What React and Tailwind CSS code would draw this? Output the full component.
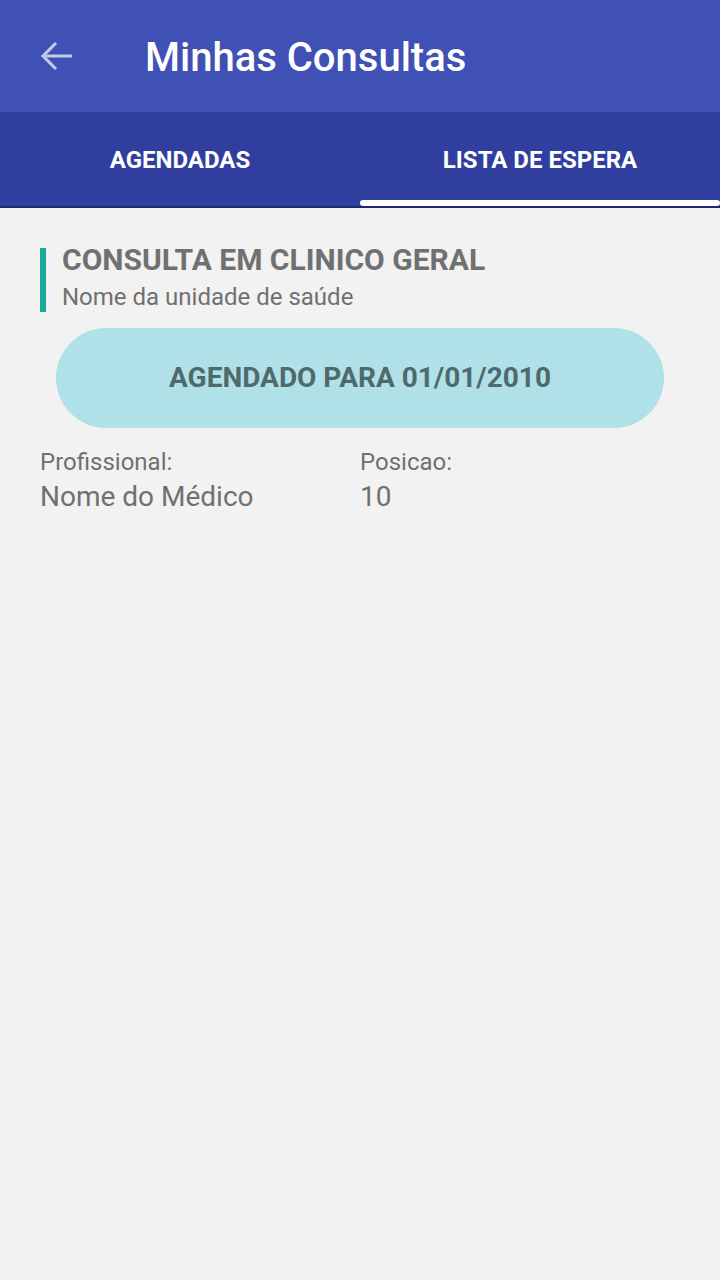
import React, { useState } from 'react';

const App = () => {
  const [tab, setTab] = useState('espera');

  return (
    <div className="min-h-screen bg-[#f2f2f2]" style={{ fontFamily: 'Roboto, "Liberation Sans", sans-serif' }}>
      {/* Toolbar */}
      <div className="h-[112px] bg-[#3f51b5] flex items-center">
        <button className="ml-[40px] w-[32px] h-[32px] flex items-center justify-center text-[#c5cae9]">
          <svg width="32" height="32" viewBox="0 0 32 32" fill="none" stroke="currentColor" strokeWidth="3">
            <path d="M32 16H4" />
            <path d="M16 3L3 16l13 13" />
          </svg>
        </button>
        <h1 className="ml-[73px] mt-[4px] text-[40px] font-medium text-white leading-none">Minhas Consultas</h1>
      </div>

      {/* Tabs */}
      <div className="relative h-[96px] bg-[#303f9f] flex border-b-2 border-[#1f2a6e]">
        <button
          onClick={() => setTab('agendadas')}
          className="relative flex-1 flex items-center justify-center text-[24px] font-bold text-white pt-[2px]"
        >
          AGENDADAS
          {tab === 'agendadas' && (
            <span className="absolute left-0 right-0 bottom-0 h-[6px] bg-white rounded-[3px]" />
          )}
        </button>
        <button
          onClick={() => setTab('espera')}
          className="relative flex-1 flex items-center justify-center text-[24px] font-bold text-white pt-[2px]"
        >
          LISTA DE ESPERA
          {tab === 'espera' && (
            <span className="absolute left-0 right-0 bottom-0 h-[6px] bg-white rounded-[3px]" />
          )}
        </button>
      </div>

      {/* Card */}
      <div className="px-[40px] pt-[40px]">
        <div className="border-l-[6px] border-[#1aaa9a] pl-[16px] h-[64px]">
          <h2 className="text-[30px] font-bold text-[#707070] leading-[24px] whitespace-nowrap">CONSULTA EM CLINICO GERAL</h2>
          <p className="mt-[13px] text-[24px] text-[#707070] leading-[24px]">Nome da unidade de saúde</p>
        </div>

        <div className="mt-[16px] mx-[16px] h-[100px] rounded-full bg-[#b1e1e8] flex items-center justify-center">
          <span className="text-[28px] font-bold text-[#4f6a6c]">AGENDADO PARA 01/01/2010</span>
        </div>

        <div className="mt-[19px] grid grid-cols-2 text-[#707070]">
          <div>
            <p className="text-[24px] leading-[30px]">Profissional:</p>
            <p className="text-[28px] leading-[40px]">Nome do Médico</p>
          </div>
          <div>
            <p className="text-[24px] leading-[30px]">Posicao:</p>
            <p className="text-[28px] leading-[40px]">10</p>
          </div>
        </div>
      </div>
    </div>
  );
};

export default App;
